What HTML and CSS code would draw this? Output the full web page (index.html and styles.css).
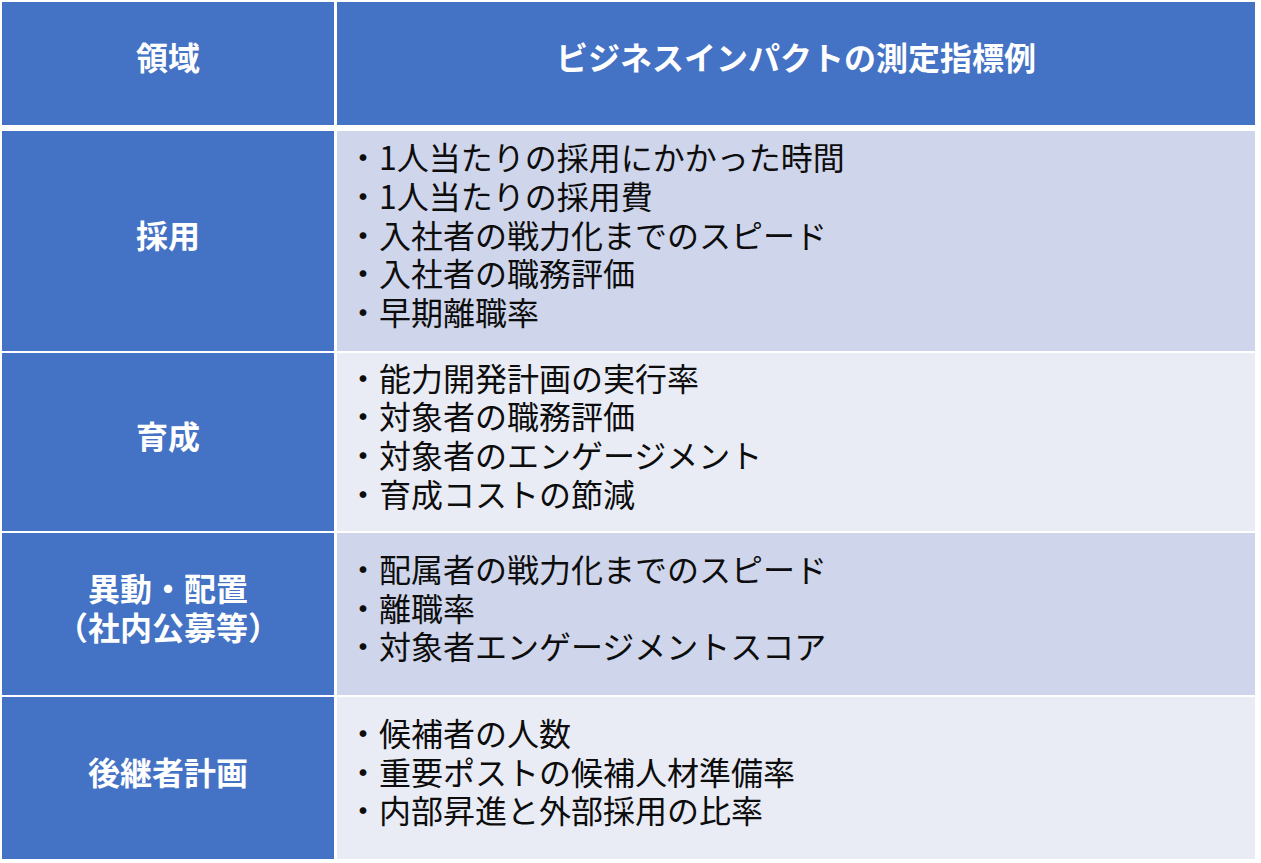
FILE: index.html
```html
<!DOCTYPE html>
<html lang="ja">
<head>
<meta charset="utf-8">
<title>ビジネスインパクトの測定指標例</title>
<link rel="stylesheet" href="styles.css">
</head>
<body>
<div class="table">
  <div class="row head">
    <div class="cell key">領域</div>
    <div class="cell key">ビジネスインパクトの測定指標例</div>
  </div>
  <div class="row r1 odd">
    <div class="cell key">採用</div>
    <div class="cell val">
      <p>・1人当たりの採用にかかった時間</p>
      <p>・1人当たりの採用費</p>
      <p>・入社者の戦力化までのスピード</p>
      <p>・入社者の職務評価</p>
      <p>・早期離職率</p>
    </div>
  </div>
  <div class="row r2 even">
    <div class="cell key">育成</div>
    <div class="cell val">
      <p>・能力開発計画の実行率</p>
      <p>・対象者の職務評価</p>
      <p>・対象者のエンゲージメント</p>
      <p>・育成コストの節減</p>
    </div>
  </div>
  <div class="row r3 odd">
    <div class="cell key"><p>異動・配置</p><p>（社内公募等）</p></div>
    <div class="cell val">
      <p>・配属者の戦力化までのスピード</p>
      <p>・離職率</p>
      <p>・対象者エンゲージメントスコア</p>
    </div>
  </div>
  <div class="row r4 even">
    <div class="cell key">後継者計画</div>
    <div class="cell val">
      <p>・候補者の人数</p>
      <p>・重要ポストの候補人材準備率</p>
      <p>・内部昇進と外部採用の比率</p>
    </div>
  </div>
</div>
</body>
</html>
```
FILE: styles.css
```css
* { box-sizing: border-box; }
html, body { margin: 0; padding: 0; background: #ffffff; }
body {
  font-family: "Noto Sans CJK JP", "Noto Sans", sans-serif;
  width: 1261px;
  height: 863px;
  overflow: hidden;
}
.table {
  display: flex;
  flex-direction: column;
  gap: 2px;
  padding: 2px 0 0 2px;
}
.row {
  display: grid;
  grid-template-columns: 332px 918px;
  column-gap: 3px;
}
.head { height: 123px; margin-bottom: 4px; }
.r1 { height: 220px; }
.r2 { height: 178px; }
.r3 { height: 162px; }
.r4 { height: 162px; }
.cell {
  display: flex;
  flex-direction: column;
  justify-content: center;
  font-size: 32px;
  line-height: 38.75px;
  padding-bottom: 14px;
}
.cell p { margin: 0; }
.key {
  background: #4472c4;
  color: #ffffff;
  font-weight: 700;
  align-items: center;
  text-align: center;
}
.val {
  color: #0d0d0d;
  padding-left: 10px;
}
.odd .val { background: #cfd5ea; }
.even .val { background: #e9ebf5; }
```
